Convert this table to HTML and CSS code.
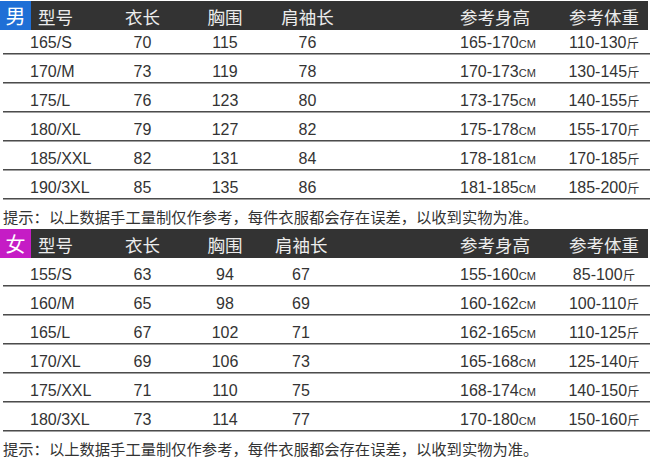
FILE: index.html
```html
<!DOCTYPE html>
<html lang="zh-CN">
<head>
<meta charset="utf-8">
<title>尺码表</title>
<link rel="stylesheet" href="styles.css">
</head>
<body>
<div class="page">
  <section class="chart male">
    <div class="head">
      <div class="c1"><span class="tag">男</span><span class="lbl">型号</span></div>
      <div class="c2">衣长</div>
      <div class="c3">胸围</div>
      <div class="c4">肩袖长</div>
      <div class="c5">参考身高</div>
      <div class="c6">参考体重</div>
    </div>
    <div class="row first"><div class="c1">165/S</div><div class="c2">70</div><div class="c3">115</div><div class="c4">76</div><div class="c5">165-170<span class="cm">cm</span></div><div class="c6">110-130<span class="jin">斤</span></div></div>
    <div class="row"><div class="c1">170/M</div><div class="c2">73</div><div class="c3">119</div><div class="c4">78</div><div class="c5">170-173<span class="cm">cm</span></div><div class="c6">130-145<span class="jin">斤</span></div></div>
    <div class="row"><div class="c1">175/L</div><div class="c2">76</div><div class="c3">123</div><div class="c4">80</div><div class="c5">173-175<span class="cm">cm</span></div><div class="c6">140-155<span class="jin">斤</span></div></div>
    <div class="row"><div class="c1">180/XL</div><div class="c2">79</div><div class="c3">127</div><div class="c4">82</div><div class="c5">175-178<span class="cm">cm</span></div><div class="c6">155-170<span class="jin">斤</span></div></div>
    <div class="row"><div class="c1">185/XXL</div><div class="c2">82</div><div class="c3">131</div><div class="c4">84</div><div class="c5">178-181<span class="cm">cm</span></div><div class="c6">170-185<span class="jin">斤</span></div></div>
    <div class="row"><div class="c1">190/3XL</div><div class="c2">85</div><div class="c3">135</div><div class="c4">86</div><div class="c5">181-185<span class="cm">cm</span></div><div class="c6">185-200<span class="jin">斤</span></div></div>
  </section>
  <p class="tip">提示：以上数据手工量制仅作参考，每件衣服都会存在误差，以收到实物为准。</p>
  <section class="chart female">
    <div class="head">
      <div class="c1"><span class="tag">女</span><span class="lbl">型号</span></div>
      <div class="c2">衣长</div>
      <div class="c3">胸围</div>
      <div class="c4">肩袖长</div>
      <div class="c5">参考身高</div>
      <div class="c6">参考体重</div>
    </div>
    <div class="row"><div class="c1">155/S</div><div class="c2">63</div><div class="c3">94</div><div class="c4">67</div><div class="c5">155-160<span class="cm">cm</span></div><div class="c6">85-100<span class="jin">斤</span></div></div>
    <div class="row"><div class="c1">160/M</div><div class="c2">65</div><div class="c3">98</div><div class="c4">69</div><div class="c5">160-162<span class="cm">cm</span></div><div class="c6">100-110<span class="jin">斤</span></div></div>
    <div class="row"><div class="c1">165/L</div><div class="c2">67</div><div class="c3">102</div><div class="c4">71</div><div class="c5">162-165<span class="cm">cm</span></div><div class="c6">110-125<span class="jin">斤</span></div></div>
    <div class="row"><div class="c1">170/XL</div><div class="c2">69</div><div class="c3">106</div><div class="c4">73</div><div class="c5">165-168<span class="cm">cm</span></div><div class="c6">125-140<span class="jin">斤</span></div></div>
    <div class="row"><div class="c1">175/XXL</div><div class="c2">71</div><div class="c3">110</div><div class="c4">75</div><div class="c5">168-174<span class="cm">cm</span></div><div class="c6">140-150<span class="jin">斤</span></div></div>
    <div class="row"><div class="c1">180/3XL</div><div class="c2">73</div><div class="c3">114</div><div class="c4">77</div><div class="c5">170-180<span class="cm">cm</span></div><div class="c6">150-160<span class="jin">斤</span></div></div>
  </section>
  <p class="tip tip-last">提示：以上数据手工量制仅作参考，每件衣服都会存在误差，以收到实物为准。</p>
</div>
</body>
</html>
```

FILE: styles.css
```css
* { box-sizing: border-box; }

body {
  margin: 0;
  background: #ffffff;
  font-family: "Liberation Sans", "Noto Sans CJK SC", sans-serif;
  color: #333333;
}

.page {
  width: 653px;
  padding-top: 1px;
}

.chart {
  width: 650px;
}

.male {
  --cols: 110px 65px 100px 65px 220px 88px;
  --c5pad: 120px;
  --tag: #1f6fd6;
}

.female {
  --cols: 110px 65px 100px 52px 233px 88px;
  --c5pad: 133px;
  --tag: #c51cc5;
}

.head {
  display: grid;
  grid-template-columns: var(--cols);
  height: 29px;
  width: 648px;
  background: #333333;
  color: #ececec;
  font-family: "Noto Sans CJK SC", sans-serif;
  font-size: 17.5px;
  line-height: 24px;
  align-items: center;
}

.head > div {
  padding-top: 3px;
  white-space: nowrap;
}

.head > .c1 {
  display: flex;
  align-items: center;
  gap: 7px;
  height: 29px;
  padding-top: 0;
}

.head .lbl {
  padding-top: 3px;
}

.tag {
  width: 31px;
  height: 29px;
  background: var(--tag);
  color: #ffffff;
  font-size: 20px;
  line-height: 29px;
  text-align: center;
}

.row {
  display: grid;
  grid-template-columns: var(--cols);
  height: 29px;
  align-items: end;
  padding-bottom: 4px;
  font-size: 16px;
  line-height: 1;
  white-space: nowrap;
  background:
    linear-gradient(#4c4c4c, #4c4c4c) 3px calc(100% - 1px) / 647px 1px no-repeat,
    linear-gradient(#a0a0a0, #a0a0a0) 3px 100% / 647px 1px no-repeat;
}

.row.first {
  height: 25px;
}

.c1 { padding-left: 30px; }
.head > .c1 { padding-left: 0; }
.c2, .c3, .c4, .c6 { text-align: center; }
.c5 { padding-left: var(--c5pad); }

.cm {
  font-variant: small-caps;
  font-size: 16px;
}

.jin {
  font-family: "Noto Sans CJK SC", sans-serif;
  font-size: 12.5px;
}

.tip {
  margin: 0;
  height: 29px;
  padding: 3px 0 0 3px;
  font-family: "Noto Sans CJK SC", sans-serif;
  font-size: 15.3px;
  line-height: 26px;
  color: #333333;
  white-space: nowrap;
}

.tip-last {
  height: 35px;
}
```
